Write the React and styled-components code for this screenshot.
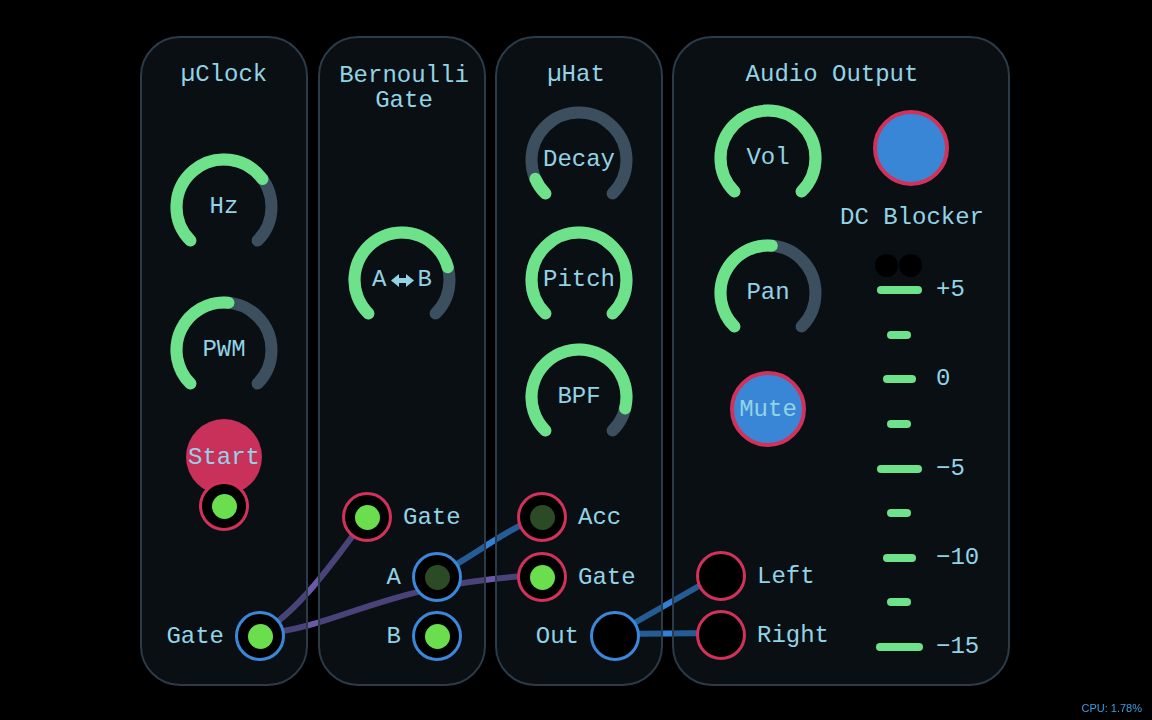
import React from 'react'
import styled, { createGlobalStyle } from 'styled-components'

const GlobalStyle = createGlobalStyle`
  html, body {
    margin: 0;
    background: #000;
    height: 100%;
  }
  body {
    font-family: "Liberation Mono", "DejaVu Sans Mono", monospace;
    color: #93d3e6;
  }
`

const Page = styled.div`
  width: 1152px;
  height: 720px;
  box-sizing: border-box;
  padding: 36px 0 0 140px;
  overflow: hidden;
`

const Rack = styled.div`
  position: relative;
  display: flex;
  gap: 9px;
  width: 870px;
  height: 650px;
`

/* panels sit over the cables with a see-through fill, so cables look dimmer on them */
const Panel = styled.div`
  position: relative;
  z-index: 2;
  box-sizing: border-box;
  width: ${p => p.$w}px;
  height: 650px;
  margin-right: ${p => p.$gap || 0}px;
  border: 2px solid #2c3b48;
  border-radius: 40px;
  background: rgba(25, 37, 50, 0.4);
  display: flex;
  flex-direction: column;
  align-items: center;
`

const Title = styled.div`
  margin-top: ${p => p.$mt}px;
  margin-left: ${p => Math.max(0, p.$shift || 0) * 2}px;
  margin-right: ${p => Math.max(0, -(p.$shift || 0)) * 2}px;
  font-size: 24px;
  line-height: ${p => p.$lh || 28}px;
  text-align: center;
  white-space: pre;
`

const KnobBox = styled.div`
  margin-top: ${p => p.$mt}px;
  width: 108px;
  height: 108px;
  display: grid;
  place-items: center;
  & > * {
    grid-area: 1 / 1;
  }
`

const KnobLabel = styled.span`
  display: flex;
  align-items: center;
  gap: 4px;
  font-size: 24px;
  line-height: 1;
  white-space: nowrap;
`

function arc(a0, a1) {
  const r = 47.5
  const rad = a => (a * Math.PI) / 180
  const x0 = 54 + r * Math.cos(rad(a0))
  const y0 = 54 + r * Math.sin(rad(a0))
  const x1 = 54 + r * Math.cos(rad(a1))
  const y1 = 54 + r * Math.sin(rad(a1))
  const large = a1 - a0 > 180 ? 1 : 0
  return `M${x0} ${y0} A${r} ${r} 0 ${large} 1 ${x1} ${y1}`
}

function Knob({ label, value, mt }) {
  const end = 135 + 270 * value
  return (
    <KnobBox $mt={mt}>
      <svg width="108" height="108" viewBox="0 0 108 108">
        <path d={arc(135, 405)} fill="none" stroke="#3b4f5e" strokeWidth="12" strokeLinecap="round" />
        <path d={arc(135, end)} fill="none" stroke="#6ee28a" strokeWidth="12" strokeLinecap="round" />
      </svg>
      <KnobLabel>{label}</KnobLabel>
    </KnobBox>
  )
}

function SwapArrow() {
  return (
    <svg width="23" height="13" viewBox="0 0 23 13">
      <path d="M0 6.5 L8 0 L8 4 L15 4 L15 0 L23 6.5 L15 13 L15 9 L8 9 L8 13 Z" fill="#93d3e6" />
    </svg>
  )
}

const RoundButton = styled.div`
  margin-top: ${p => p.$mt}px;
  margin-left: ${p => p.$ml || 0}px;
  box-sizing: border-box;
  width: ${p => p.$size}px;
  height: ${p => p.$size}px;
  border-radius: 50%;
  background: ${p => p.$fill};
  border: ${p => (p.$ring ? `4px solid ${p.$ring}` : 'none')};
  display: flex;
  align-items: center;
  justify-content: center;
  font-size: 24px;
  white-space: nowrap;
  flex-shrink: 0;
`

const PortRow = styled.div`
  margin-top: ${p => p.$mt}px;
  align-self: stretch;
  height: 50px;
  display: flex;
  align-items: center;
  gap: 11px;
  justify-content: ${p => p.$justify};
  padding: 0 ${p => p.$pr || 0}px 0 ${p => p.$pl || 0}px;
  font-size: 24px;
`

const Jack = styled.div`
  position: relative;
  z-index: 2;
  box-sizing: border-box;
  width: 50px;
  height: 50px;
  border-radius: 50%;
  background: #000;
  border: 3px solid ${p => (p.$kind === 'in' ? '#d1325b' : '#3b88db')};
  display: flex;
  align-items: center;
  justify-content: center;
  flex-shrink: 0;
`

const Led = styled.div`
  width: 25px;
  height: 25px;
  border-radius: 50%;
  background: ${p => (p.$on ? '#6ade4c' : '#2c4a25')};
`

function Port({ kind, led }) {
  return <Jack $kind={kind}>{led && <Led $on={led === 'on'} />}</Jack>
}

const Columns = styled.div`
  align-self: stretch;
  display: flex;
  padding-left: 22px;
`

const Column = styled.div`
  width: ${p => p.$w}px;
  display: flex;
  flex-direction: column;
  align-items: ${p => p.$align};
`

const SmallLabel = styled.div`
  margin-top: ${p => p.$mt}px;
  font-size: 24px;
  line-height: 28px;
  white-space: nowrap;
`

const Dots = styled.div`
  margin-top: 22.5px;
  margin-left: 35px;
  display: flex;
`

const Dot = styled.div`
  width: 23px;
  height: 23px;
  margin-right: 1px;
  border-radius: 50%;
  background: #000;
`

const Meter = styled.div`
  margin-top: 2.8px;
  margin-left: 34px;
  display: grid;
  grid-template-columns: 50px auto;
  column-gap: 12px;
  row-gap: 24.6px;
  grid-auto-rows: 20px;
  align-items: center;
`

const Tick = styled.div`
  justify-self: center;
  width: ${p => p.$w}px;
  height: 8px;
  border-radius: 4px;
  background: #6ee28a;
`

const TickLabel = styled.span`
  font-size: 24px;
  line-height: 20px;
`

const Cables = styled.svg`
  position: absolute;
  left: 0;
  top: 0;
  z-index: 1;
  pointer-events: none;
`

const Cpu = styled.div`
  position: fixed;
  right: 10px;
  bottom: 6px;
  font-family: "Liberation Sans", Arial, sans-serif;
  font-size: 11px;
  color: #3a9ee0;
`

const ticks = [
  { w: 45, label: '+5' },
  { w: 24 },
  { w: 33, label: '0' },
  { w: 24 },
  { w: 45, label: '−5' },
  { w: 24 },
  { w: 33, label: '−10' },
  { w: 24 },
  { w: 47, label: '−15' },
]

export default function App() {
  return (
    <Page>
      <GlobalStyle />
      <Rack>
        <Panel $w={168} $gap={1}>
          <Title $mt={23}>µClock</Title>
          <Knob label="Hz" value={0.7} mt={64} />
          <Knob label="PWM" value={0.52} mt={35} />
          <RoundButton $mt={15} $size={76} $fill="#c9305a">Start</RoundButton>
          <PortRow $mt={-14} $justify="center">
            <Port kind="in" led="on" />
          </PortRow>
          <PortRow $mt={80} $justify="flex-end" $pr={21}>
            Gate
            <Port kind="out" led="on" />
          </PortRow>
        </Panel>

        <Panel $w={168}>
          <Title $mt={24.5} $lh={25} $shift={2}>{'Bernoulli\nGate'}</Title>
          <Knob label={<>A<SwapArrow />B</>} value={0.776} mt={113.5} />
          <PortRow $mt={158} $justify="flex-start" $pl={22}>
            <Port kind="in" led="on" />
            Gate
          </PortRow>
          <PortRow $mt={10} $justify="flex-end" $pr={22}>
            A
            <Port kind="out" led="off" />
          </PortRow>
          <PortRow $mt={9} $justify="flex-end" $pr={22}>
            B
            <Port kind="out" led="on" />
          </PortRow>
        </Panel>

        <Panel $w={168}>
          <Title $mt={23} $shift={-3}>µHat</Title>
          <Knob label="Decay" value={0.08} mt={17} />
          <Knob label="Pitch" value={1} mt={12} />
          <Knob label="BPF" value={0.885} mt={9} />
          <PortRow $mt={41} $justify="flex-start" $pl={20}>
            <Port kind="in" led="off" />
            Acc
          </PortRow>
          <PortRow $mt={10} $justify="flex-start" $pl={20}>
            <Port kind="in" led="on" />
            Gate
          </PortRow>
          <PortRow $mt={9} $justify="flex-end" $pr={21}>
            Out
            <Port kind="out" />
          </PortRow>
        </Panel>

        <Panel $w={338}>
          <Title $mt={23} $shift={-9}>Audio Output</Title>
          <Columns>
            <Column $w={144} $align="center">
              <Knob label="Vol" value={1} mt={15} />
              <Knob label="Pan" value={0.517} mt={26.5} />
              <RoundButton $mt={24.5} $size={76} $fill="#3a86d6" $ring="#d1325b">Mute</RoundButton>
              <PortRow $mt={104} $justify="flex-start" $pl={0}>
                <Port kind="in" />
                Left
              </PortRow>
              <PortRow $mt={9} $justify="flex-start" $pl={0}>
                <Port kind="in" />
                Right
              </PortRow>
            </Column>
            <Column $w={160} $align="flex-start">
              <RoundButton $mt={20.7} $ml={32.7} $size={76} $fill="#3a86d6" $ring="#d1325b" />
              <SmallLabel $mt={18.3}>DC Blocker</SmallLabel>
              <Dots>
                <Dot />
                <Dot />
              </Dots>
              <Meter>
                {ticks.map((t, i) => (
                  <React.Fragment key={i}>
                    <Tick $w={t.w} />
                    <TickLabel>{t.label || ''}</TickLabel>
                  </React.Fragment>
                ))}
              </Meter>
            </Column>
          </Columns>
        </Panel>

        <Cables width="870" height="650" viewBox="140 36 870 650">
          <g fill="none" strokeWidth="6" strokeLinecap="round">
            <path d="M260 634 C300 610 335 560 368 515" stroke="#6b58a8" />
            <path d="M260 634 C340 628 385 582 543 575" stroke="#6b58a8" />
            <path d="M438 575 C475 555 505 530 543 515" stroke="#3080d8" />
            <path d="M615 634 C650 614 685 594 720 574" stroke="#3080d8" />
            <path d="M615 634 L720 633" stroke="#3080d8" />
          </g>
        </Cables>
      </Rack>
      <Cpu>CPU: 1.78%</Cpu>
    </Page>
  )
}
